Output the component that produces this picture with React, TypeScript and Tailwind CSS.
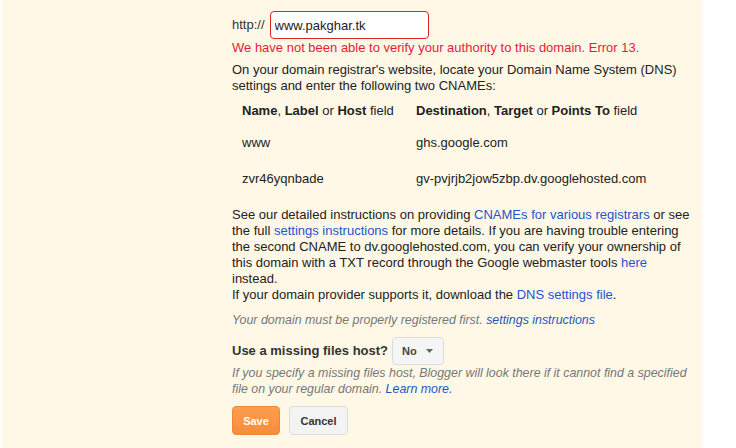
import React from "react";

const link = "text-[#2255cc]";

export default function App() {
  return (
    <div className="w-[736px] h-[448px] bg-white flex overflow-hidden font-['Liberation_Sans',Arial,sans-serif] text-[13px] leading-4 text-[#222]">
      <div className="ml-[2px] w-[700px] h-full bg-[#fff8e6] pl-[230px] pt-[11px]">
        <div className="w-[460px]">
          {/* Domain input */}
          <div className="flex items-center">
            <span className="text-[#333]">http://</span>
            <input
              readOnly
              value="www.pakghar.tk"
              className="ml-[5px] w-[159px] h-[28px] border border-[#dd2222] rounded-sm bg-white px-[4px] text-[13px] text-[#222] outline-none font-['Liberation_Sans',Arial,sans-serif]"
            />
          </div>
          <p className="mt-[1px] text-[#e8193c]">
            We have not been able to verify your authority to this domain. Error 13.
          </p>
          <p className="mt-[6px]">
            On your domain registrar's website, locate your Domain Name System (DNS) settings and enter the following two CNAMEs:
          </p>

          {/* CNAME table */}
          <div className="mt-[1px] pl-[10px]">
            <div className="flex items-center h-[32px]">
              <div className="w-[174px]">
                <b>Name</b>, <b>Label</b> or <b>Host</b> field
              </div>
              <div>
                <b>Destination</b>, <b>Target</b> or <b>Points To</b> field
              </div>
            </div>
            <div className="flex items-center h-[32px]">
              <div className="w-[174px]">www</div>
              <div>ghs.google.com</div>
            </div>
            <div className="flex items-center h-[40px]">
              <div className="w-[174px]">zvr46yqnbade</div>
              <div>gv-pvjrjb2jow5zbp.dv.googlehosted.com</div>
            </div>
          </div>

          <p className="mt-[8px]">
            See our detailed instructions on providing <span className={link}>CNAMEs for various registrars</span> or see the full{" "}
            <span className={link}>settings instructions</span> for more details. If you are having trouble entering the second CNAME to
            dv.googlehosted.com, you can verify your ownership of this domain with a TXT record through the Google webmaster tools{" "}
            <span className={link}>here</span> instead.
            <br />
            If your domain provider supports it, download the <span className={link}>DNS settings file</span>.
          </p>
          <p className="mt-[9px] italic text-[12.4px] text-[#777]">
            Your domain must be properly registered first. <span className={link}>settings instructions</span>
          </p>

          {/* Missing files host */}
          <div className="mt-[9px] flex items-center">
            <span className="font-bold text-[#333]">Use a missing files host?</span>
            <div className="ml-[4px] w-[52px] h-[28px] flex items-center bg-[#f5f5f5] border border-[#dcdcdc] rounded-sm pl-[9px] text-[11px] font-bold text-[#444]">
              No
              <svg className="ml-[9px]" width="7" height="4" viewBox="0 0 7 4">
                <path d="M0 0h7L3.5 4z" fill="#666" />
              </svg>
            </div>
          </div>
          <p className="italic text-[12.4px] text-[#777]">
            If you specify a missing files host, Blogger will look there if it cannot find a specified file on your regular domain.{" "}
            <span className={link}>Learn more.</span>
          </p>

          {/* Actions */}
          <div className="mt-[9px] flex gap-[9px]">
            <button className="h-[29px] w-[48px] rounded-sm border border-[#ec8836] bg-gradient-to-b from-[#fe9d4e] to-[#f58d3c] text-white text-[11px] font-bold">
              Save
            </button>
            <button className="h-[29px] w-[59px] rounded-sm border border-[#dcdcdc] bg-[#f3f3f3] text-[#333] text-[11px] font-bold">
              Cancel
            </button>
          </div>
        </div>
      </div>
    </div>
  );
}
